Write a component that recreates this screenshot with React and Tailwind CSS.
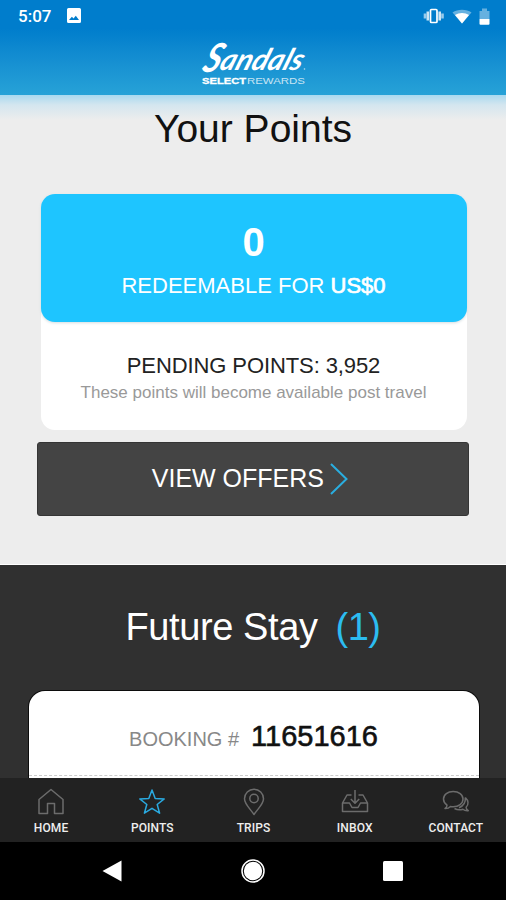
import React from "react";

function StatusBar() {
  return (
    <div className="flex h-8 items-center justify-between pl-[18px] pr-[16px] text-white">
      <div className="flex items-center gap-[15px]">
        <span className="w-[34px] whitespace-nowrap font-[Roboto,sans-serif] text-[17px] leading-8 font-medium">5:07</span>
        <svg className="mt-[-1px]" width="14" height="15" viewBox="0 0 14 15">
          <path fillRule="evenodd" fill="#fff" d="M1.5 0h11A1.5 1.5 0 0 1 14 1.500v12a1.500 1.500 0 0 1-1.500 1.500h-11A1.500 1.500 0 0 1 0 13.500v-12A1.500 1.500 0 0 1 1.500 0ZM2 12h10L8.800 7.700 6.500 10.500 4.900 8.700Z" />
        </svg>
      </div>
      <div className="flex items-center">
        <svg width="22" height="16" viewBox="0 0 22 16" fill="none" stroke="#fff">
          <rect x="7.500" y="1.500" width="6.500" height="13" rx="1" strokeWidth="1.700" />
          <path d="M4.800 3.500v9M16.700 3.500v9" strokeWidth="2.600" opacity=".8" />
          <path d="M2 5.500v5M19.500 5.500v5" strokeWidth="2.600" opacity=".6" />
        </svg>
        <svg className="ml-[7px]" width="20" height="15" viewBox="0 0 20 15">
          <path d="M0.500 3.500C5.500-.3 14.500-.3 19.500 3.500L10 14.500Z" fill="#fff" opacity=".4" />
          <path d="M3 6C7 3.200 13 3.200 17 6L10 14.500Z" fill="#fff" />
        </svg>
        <svg className="ml-[7px]" width="11" height="17" viewBox="0 0 11 17">
          <path d="M0.500 3h2.500V.5h5V3h2.500v8H.5Z" fill="#fff" opacity=".4" />
          <path d="M.5 11h10v5a1 1 0 0 1-1 .8h-8a1 1 0 0 1-1-.8Z" fill="#fff" />
        </svg>
      </div>
    </div>
  );
}

function Logo() {
  return (
    <svg className="mx-auto mt-[2px] block overflow-visible" width="110" height="56" viewBox="0 0 110 56" fill="#fff">
      <g transform="translate(4 37) skewX(-20)" fontFamily="Lato, sans-serif" fontStyle="italic" fontWeight="700">
        <text x="-1" y="1" fontSize="40" textLength="17" lengthAdjust="spacingAndGlyphs">S</text>
        <text x="16" y="-1" fontSize="30" textLength="82" lengthAdjust="spacingAndGlyphs">andals</text>
      </g>
      <circle cx="106.500" cy="35" r=".8" opacity=".7" />
      <text x="4" y="50" fontFamily="Liberation Sans, sans-serif" fontWeight="700" fontSize="8.500" textLength="44" lengthAdjust="spacingAndGlyphs" stroke="#fff" strokeWidth=".3">SELECT</text>
      <text x="49" y="50" fontFamily="Liberation Sans, sans-serif" fontSize="8.500" opacity=".75" textLength="58" lengthAdjust="spacingAndGlyphs">REWARDS</text>
    </svg>
  );
}

const icons = {
  home: <path d="M2 11.500 14 1.500l12 10V25.500H17.500V15.500H10.500V25.500H2Z" />,
  points: <path d="m14 2 3.200 8.500 9 .4-7 5.600 2.400 8.700L14 20.300l-7.600 4.900 2.400-8.700-7-5.600 9-.4Z" />,
  trips: (
    <>
      <path d="M14 26.500C10 20.500 4.500 16 4.500 10.700a9.500 9.500 0 0 1 19 0C23.500 16 18 20.500 14 26.500Z" />
      <circle cx="14" cy="10.500" r="4.200" />
    </>
  ),
  inbox: (
    <>
      <path d="M10.500 7H6L1.500 15v8.500h25V15L22 7h-4.500M1.500 15H8.500l2.500 4.500h6l2.500-4.500h7" />
      <path d="M14 2v13M9.800 11l4.200 4.300 4.200-4.300" />
    </>
  ),
  contact: (
    <>
      <path d="M5 17.200C2.700 15.500 1.500 13.300 1.500 11c0-4.500 4.200-7.500 9.700-7.500S21 6.500 21 11s-4.300 7.700-9.800 7.700c-.9 0-1.800-.1-2.700-.3-1.300 1.500-3.300 2.300-5.500 2.200C4.300 19.500 5 18.400 5 17.200Z" />
      <path d="M23.300 9.500c3.200 2.800 3.700 7 .8 9.700 0 1.400.8 2.600 2.200 3.500-2.200.2-4-.2-5.400-1.400-3 .9-6 .6-8.400-.8M23.300 9.500c.4 4.500-1.500 8.300-6.300 10.300" />
    </>
  ),
};

function Tab({ icon, label, active }) {
  return (
    <div className="flex flex-1 flex-col items-center pt-[10px] pl-px">
      <svg width="28" height="28" viewBox="0 0 28 28" fill="none" strokeWidth="1.500" strokeLinejoin="round" className={active ? "stroke-[#2aa9df]" : "stroke-[#6c6c6c]"}>
        {icons[icon]}
      </svg>
      <span className="mt-[5px] font-[Roboto,sans-serif] text-[12px] leading-[14px] font-medium tracking-[0.1px] text-[#eeeeee]">{label}</span>
    </div>
  );
}

export default function App() {
  return (
    <div className="flex h-[900px] w-[506px] flex-col overflow-hidden bg-[#ededed] font-['Liberation_Sans',Arial,sans-serif]">
      <header className="h-[95px] shrink-0 bg-linear-to-b from-[#007dcc] from-30% to-[#27a2d7]">
        <StatusBar />
        <Logo />
      </header>

      <section className="h-[470px] shrink-0 border-b border-white bg-[linear-gradient(to_bottom,#a9d9ef_0px,#d4e6ef_10px,#ededed_25px)] pt-[14px]">
        <h1 className="text-center text-[39px] leading-10 text-[#111111]">Your Points</h1>
        <div className="mt-[45px] ml-[40.500px] h-[236px] w-[426px] rounded-[14px] bg-white text-center">
          <div className="h-32 rounded-[14px] bg-[#1ec5ff] pt-7 text-white shadow-[0_1px_3px_#d5dde0]">
            <div className="text-[40px] leading-10 font-bold">0</div>
            <div className="mt-3 text-[22px] leading-6">
              REDEEMABLE FOR <span className="[-webkit-text-stroke:0.7px_white]">US$0</span>
            </div>
          </div>
          <p className="mt-8 text-[22px] leading-6 tracking-[-0.100px] text-[#222222]">PENDING POINTS: 3,952</p>
          <p className="mt-[5px] text-[17px] leading-5 text-[#999999]">These points will become available post travel</p>
        </div>
        <button className="mt-3 ml-[37.400px] flex h-[74px] w-[432px] items-center justify-center gap-[6px] rounded-[3px] border border-[#353535] bg-[#444444] pr-[7px] text-[25px] text-white">
          <span>VIEW OFFERS</span>
          <svg width="18" height="32" viewBox="0 0 18 32" fill="none" stroke="#2aaee0" strokeWidth="2">
            <path d="m1 1 15.500 15L1 31" />
          </svg>
        </button>
      </section>

      <section className="h-[213px] shrink-0 overflow-hidden bg-[#303030] pt-[42px]">
        <h2 className="flex justify-center gap-[18px] text-[38px] leading-10 text-white">
          <span className="tracking-[-0.400px]">Future Stay</span>
          <span className="tracking-[-0.500px] text-[#2cbcf0]">(1)</span>
        </h2>
        <div className="mt-[44px] ml-[28.500px] h-[100px] w-[450px] rounded-t-[16px] bg-white shadow-[0_0_0_1px_#0c0c0c]">
          <div className="flex h-[85px] items-baseline justify-center gap-[12px] border-b border-dashed border-[#cccccc] pt-[28px]">
            <span className="text-[20px] text-[#888888]">BOOKING #</span>
            <span className="text-[29px] leading-[34px] text-[#111111] [-webkit-text-stroke:0.6px_#111111]">11651616</span>
          </div>
        </div>
      </section>

      <nav className="flex h-16 shrink-0 bg-[#222222]">
        <Tab icon="home" label="HOME" />
        <Tab icon="points" label="POINTS" active />
        <Tab icon="trips" label="TRIPS" />
        <Tab icon="inbox" label="INBOX" />
        <Tab icon="contact" label="CONTACT" />
      </nav>

      <div className="flex h-[58px] shrink-0 items-center justify-between bg-black pr-[103px] pl-[102px]">
        <svg width="20" height="22" viewBox="0 0 20 22"><path d="M19.500.5v21L.5 11Z" fill="#fff" /></svg>
        <svg width="24" height="24" viewBox="0 0 24 24">
          <circle cx="12" cy="12" r="11" fill="none" stroke="#fff" strokeWidth="1.500" />
          <circle cx="12" cy="12" r="9.200" fill="#fff" />
        </svg>
        <svg width="20" height="20" viewBox="0 0 20 20"><rect width="20" height="20" rx="1.500" fill="#fff" /></svg>
      </div>
    </div>
  );
}
